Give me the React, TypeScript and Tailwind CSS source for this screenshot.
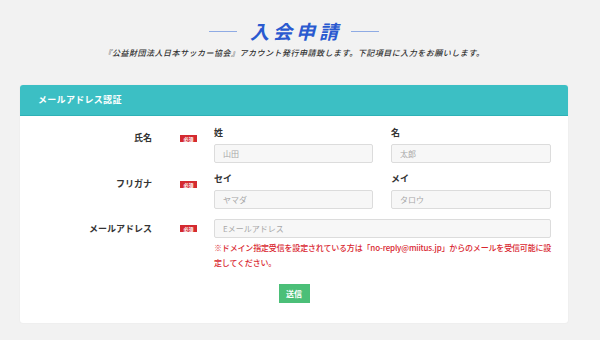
import React from "react";

const font = "font-['Noto_Sans_CJK_JP','Noto_Sans',sans-serif]";

function Badge() {
  return (
    <span className="inline-flex h-[7px] w-[17px] items-center justify-center bg-[#d42a30] text-[5px] font-bold leading-[7px] text-white">
      必須
    </span>
  );
}

function Field({ placeholder }: { placeholder: string }) {
  return (
    <input
      readOnly
      placeholder={placeholder}
      className="block h-[19px] w-full rounded-[2px] border border-[#dcdcdc] bg-[#f7f7f7] px-[8px] text-[8px] text-[#333] outline-none placeholder:text-[#a8a8a8]"
    />
  );
}

function Row({
  label,
  children,
  labelH = 22,
  className = "",
}: {
  label: string;
  children: React.ReactNode;
  labelH?: number;
  className?: string;
}) {
  return (
    <div className={`flex items-start ${className}`}>
      <div
        className={`flex w-[132px] items-center justify-end text-[9px] font-bold text-[#333] ${
          labelH === 22 ? "h-[22px]" : "h-[19px]"
        }`}
      >
        {label}
      </div>
      <div
        className={`ml-[28px] flex items-center ${
          labelH === 22 ? "h-[22px]" : "h-[19px]"
        }`}
      >
        <Badge />
      </div>
      <div className="ml-[17px] w-[337px]">{children}</div>
    </div>
  );
}

function Pair({
  a,
  b,
  pa,
  pb,
}: {
  a: string;
  b: string;
  pa: string;
  pb: string;
}) {
  return (
    <div className="grid grid-cols-[159px_160px] gap-x-[18px]">
      <div>
        <div className="h-[12px] text-[9px] font-bold leading-[12px] text-[#333]">
          {a}
        </div>
        <div className="mt-[5px]">
          <Field placeholder={pa} />
        </div>
      </div>
      <div>
        <div className="h-[12px] text-[9px] font-bold leading-[12px] text-[#333]">
          {b}
        </div>
        <div className="mt-[5px]">
          <Field placeholder={pb} />
        </div>
      </div>
    </div>
  );
}

export default function App() {
  return (
    <div className={`min-h-[340px] w-[600px] bg-[#f2f2f2] ${font}`}>
      <div className="ml-[20px] w-[548px] pt-[19px] pb-[18px]">
        <div className="flex items-center justify-center gap-[13px]">
          <span className="h-px w-[28px] bg-[#8fabe4]" />
          <h1 className="mr-[-4px] text-[19px] font-bold italic leading-[24px] tracking-[4px] text-[#2a5ad0]">
            入会申請
          </h1>
          <span className="h-px w-[28px] bg-[#8fabe4]" />
        </div>
        <p className="mt-[4px] text-center text-[8px] font-medium italic leading-[12px] tracking-[0.5px] text-[#333]">
          『公益財団法人日本サッカー協会』アカウント発行申請致します。下記項目に入力をお願いします。
        </p>

        <div className="mt-[26px] overflow-hidden rounded-[3px] bg-white shadow-[0_0_2px_rgba(0,0,0,0.06)]">
          <div className="flex h-[31px] items-center border-b border-[#2eb1b6] bg-[#3cbfc4] px-[18px] text-[9px] font-bold tracking-[0.3px] text-white">
            メールアドレス認証
          </div>
          <div className="pt-[11px] pb-[20px]">
            <Row label="氏名">
              <Pair a="姓" b="名" pa="山田" pb="太郎" />
            </Row>
            <Row label="フリガナ" className="mt-[10px]">
              <Pair a="セイ" b="メイ" pa="ヤマダ" pb="タロウ" />
            </Row>
            <Row label="メールアドレス" labelH={19} className="mt-[10px]">
              <Field placeholder="Eメールアドレス" />
              <p className="mt-[3px] whitespace-nowrap text-[8px] font-medium leading-[14.5px] tracking-[-0.17px] text-[#d9262f]">
                ※ドメイン指定受信を設定されている方は「no-reply@miitus.jp」からのメールを受信可能に設
                <br />
                定してください。
              </p>
            </Row>
            <div className="mt-[14px] flex justify-center">
              <button className="h-[19px] w-[31px] bg-[#4bbf78] text-[8px] font-bold text-white">
                送信
              </button>
            </div>
          </div>
        </div>
      </div>
    </div>
  );
}
